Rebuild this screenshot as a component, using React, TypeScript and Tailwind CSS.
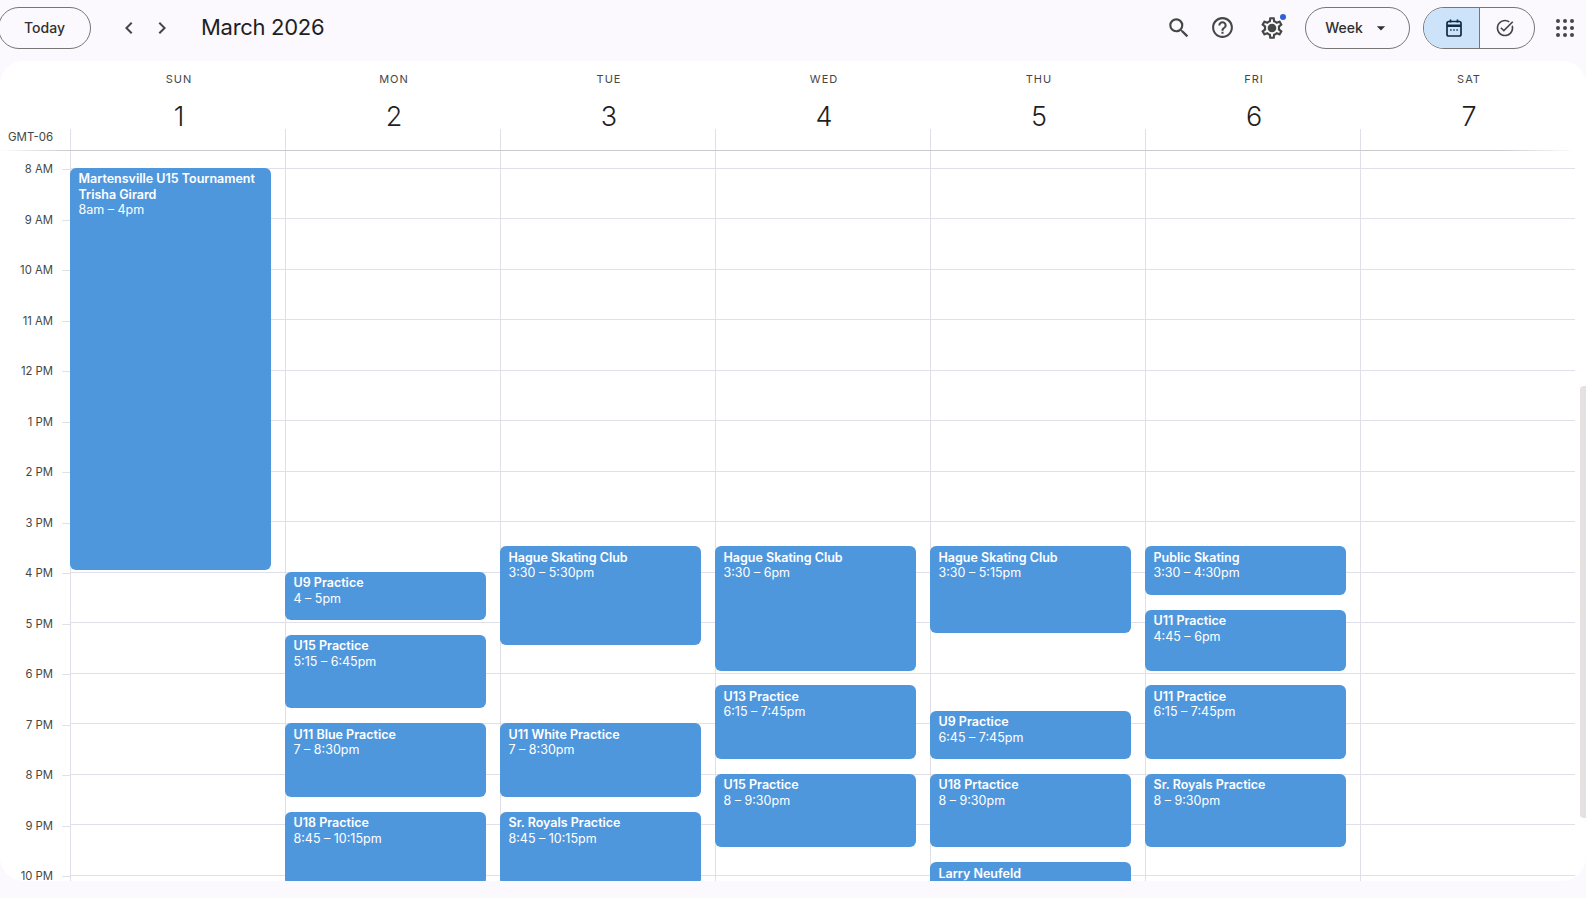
import { MdArrowDropDown, MdHelpOutline, MdOutlineSettings, MdSearch, MdOutlineTaskAlt, MdChevronLeft, MdChevronRight } from "react-icons/md";

const HOUR = 50.5;
const FIRST_LINE = 17;

const days = [
  { name: "SUN", date: 1 },
  { name: "MON", date: 2 },
  { name: "TUE", date: 3 },
  { name: "WED", date: 4 },
  { name: "THU", date: 5 },
  { name: "FRI", date: 6 },
  { name: "SAT", date: 7 },
];

const hours = ["8 AM", "9 AM", "10 AM", "11 AM", "12 PM", "1 PM", "2 PM", "3 PM", "4 PM", "5 PM", "6 PM", "7 PM", "8 PM", "9 PM", "10 PM"];

type CalEvent = { day: number; start: number; end: number; title: string; sub?: string; time: string };

const events: CalEvent[] = [
  { day: 0, start: 8, end: 16, title: "Martensville U15 Tournament", sub: "Trisha Girard", time: "8am – 4pm" },
  { day: 1, start: 16, end: 17, title: "U9 Practice", time: "4 – 5pm" },
  { day: 1, start: 17.25, end: 18.75, title: "U15 Practice", time: "5:15 – 6:45pm" },
  { day: 1, start: 19, end: 20.5, title: "U11 Blue Practice", time: "7 – 8:30pm" },
  { day: 1, start: 20.75, end: 22.25, title: "U18 Practice", time: "8:45 – 10:15pm" },
  { day: 2, start: 15.5, end: 17.5, title: "Hague Skating Club", time: "3:30 – 5:30pm" },
  { day: 2, start: 19, end: 20.5, title: "U11 White Practice", time: "7 – 8:30pm" },
  { day: 2, start: 20.75, end: 22.25, title: "Sr. Royals Practice", time: "8:45 – 10:15pm" },
  { day: 3, start: 15.5, end: 18, title: "Hague Skating Club", time: "3:30 – 6pm" },
  { day: 3, start: 18.25, end: 19.75, title: "U13 Practice", time: "6:15 – 7:45pm" },
  { day: 3, start: 20, end: 21.5, title: "U15 Practice", time: "8 – 9:30pm" },
  { day: 4, start: 15.5, end: 17.25, title: "Hague Skating Club", time: "3:30 – 5:15pm" },
  { day: 4, start: 18.75, end: 19.75, title: "U9 Practice", time: "6:45 – 7:45pm" },
  { day: 4, start: 20, end: 21.5, title: "U18 Prtactice", time: "8 – 9:30pm" },
  { day: 4, start: 21.75, end: 23, title: "Larry Neufeld", time: "9:45 – 11pm" },
  { day: 5, start: 15.5, end: 16.5, title: "Public Skating", time: "3:30 – 4:30pm" },
  { day: 5, start: 16.75, end: 18, title: "U11 Practice", time: "4:45 – 6pm" },
  { day: 5, start: 18.25, end: 19.75, title: "U11 Practice", time: "6:15 – 7:45pm" },
  { day: 5, start: 20, end: 21.5, title: "Sr. Royals Practice", time: "8 – 9:30pm" },
];

function CalendarIcon() {
  return (
    <svg width="18" height="20" viewBox="0 0 18 20" fill="none" stroke="#0f2b46" strokeWidth="1.7">
      <rect x="2" y="3.5" width="14" height="14.5" rx="1.8" />
      <path d="M2 7.8h14" strokeWidth="2.4" />
      <path d="M5.5 1.5v3M12.5 1.5v3" />
      <path d="M5.2 12h1.4M8.3 12h1.4M11.4 12h1.4" strokeWidth="1.3" />
    </svg>
  );
}

function AppsIcon() {
  const spots = [0, 1, 2].flatMap((y) => [0, 1, 2].map((x) => ({ x: 3 + x * 7, y: 3 + y * 7 })));
  return (
    <svg width="20" height="20" viewBox="0 0 20 20" fill="#444746">
      {spots.map((s) => (
        <circle key={`${s.x}-${s.y}`} cx={s.x} cy={s.y} r="2" />
      ))}
    </svg>
  );
}

function TopBar() {
  return (
    <header className="flex h-[61px] shrink-0 items-center pb-[6px] text-[#1f1f1f]">
      <button className="-ml-[2px] h-[42px] w-[93px] rounded-full border border-[#747775] font-['Inter',sans-serif] text-[14px] font-medium text-[#303030]">
        Today
      </button>
      <div className="ml-[26px] flex items-center gap-[9px] text-[#444746]">
        <MdChevronLeft size={24} />
        <MdChevronRight size={24} />
      </div>
      <h1 className="mb-[1px] ml-[27px] font-['Inter',sans-serif] text-[22px] font-normal leading-none tracking-[-0.3px]">March 2026</h1>

      <div className="ml-auto flex items-center text-[#444746]">
        <MdSearch size={26} />
        <MdHelpOutline size={25} className="ml-[18px]" />
        <div className="relative ml-[24px]">
          <MdOutlineSettings size={26} />
          <span className="absolute left-[10px] top-[10px] h-[6px] w-[6px] rounded-full bg-[#444746]" />
          <span className="absolute -right-[1px] -top-[1px] h-[6px] w-[6px] rounded-full bg-[#2f5fd8]" />
        </div>
        <button className="ml-[20px] flex h-[42px] w-[105px] items-center justify-center rounded-full border border-[#747775] pl-[1px] font-['Inter',sans-serif] text-[14px] font-medium text-[#303030]">
          Week
          <MdArrowDropDown size={20} className="ml-[8px] text-[#303030]" />
        </button>
        <div className="ml-[13px] flex h-[42px] w-[112px] overflow-hidden rounded-full border border-[#747775]">
          <div className="flex w-[56px] items-center justify-center border-r border-[#747775] bg-[#cce3fa] pl-[4px]">
            <CalendarIcon />
          </div>
          <div className="flex flex-1 items-center justify-center pr-[4px]">
            <MdOutlineTaskAlt size={20} />
          </div>
        </div>
        <div className="ml-[20px] mr-[11px] flex items-center">
          <AppsIcon />
        </div>
      </div>
    </header>
  );
}

function DayHeader() {
  return (
    <div className="flex h-[89px] shrink-0 pr-[11px]">
      <div className="flex w-[70px] shrink-0 items-end pb-[4px] pl-[8px] font-['Inter',sans-serif] text-[11.5px] text-[#444746]">GMT-06</div>
      {days.map((d) => (
        <div key={d.name} className="flex flex-1 flex-col items-center">
          <div className="mt-[11px] pl-[3px] font-['Inter',sans-serif] text-[11px] font-normal leading-[14px] tracking-[1px] text-[#444746]">{d.name}</div>
          <div className="mt-[17px] h-[26px] pl-[3px] font-['Inter',sans-serif] text-[27px] font-light leading-[27px] text-[#1f1f1f]">{d.date}</div>
          <div className="w-full flex-1 border-l border-[#dfdfe8]" />
        </div>
      ))}
    </div>
  );
}

function EventCard({ event }: { event: CalEvent }) {
  return (
    <div
      className="absolute -left-px right-[14px] overflow-hidden rounded-[6px] bg-[#4f97dd] pl-[8.5px] pt-[3.5px] font-['Inter',sans-serif] text-[12.5px] leading-[15.5px] text-white"
      style={{
        top: FIRST_LINE + (event.start - 8) * HOUR - 0.3,
        height: (event.end - event.start) * HOUR - 2.1,
      }}
    >
      <div className="font-[570]">{event.title}</div>
      {event.sub && <div className="font-[570]">{event.sub}</div>}
      <div>{event.time}</div>
    </div>
  );
}

export default function App() {
  return (
    <div className="flex h-[898px] w-[1586px] flex-col overflow-hidden bg-[#fbf9fd] pb-[17px]">
      <TopBar />
      <main className="relative flex min-h-0 flex-1 flex-col overflow-hidden rounded-[24px] bg-white">
        <DayHeader />
        <div className="h-px shrink-0 bg-[linear-gradient(to_right,transparent_0,#c9c9d0_70px,#c9c9d0_1500px,transparent_1576px)]" />

        <div className="flex min-h-0 flex-1 overflow-hidden pr-[11px]">
          {/* Hour labels sit centred on the grid lines */}
          <div className="-mt-[6.75px] w-[70px] shrink-0">
            {hours.map((h) => (
              <div key={h} className="flex h-[50.5px] items-center justify-end">
                <span className="mr-[9px] font-['Inter',sans-serif] text-[11.3px] text-[#444746]">{h}</span>
                <span className="h-px w-[8px] bg-[#e0e0ea]" />
              </div>
            ))}
          </div>

          {days.map((d, i) => (
            <div key={d.name} className="relative flex-1 border-l border-[#dfdfe8]">
              <div className="h-[17.5px] border-b border-[#e0e0ea]" />
              {hours.map((h) => (
                <div key={h} className="h-[50.5px] border-b border-[#e0e0ea]" />
              ))}
              {events
                .filter((e) => e.day === i)
                .map((e) => (
                  <EventCard key={e.title + e.start} event={e} />
                ))}
            </div>
          ))}
        </div>

        {/* Scrollbar thumb */}
        <div className="absolute bottom-[63px] right-0 top-[325px] w-[6px] rounded-l-[4px] bg-[#e5e1e1]" />
      </main>
    </div>
  );
}
